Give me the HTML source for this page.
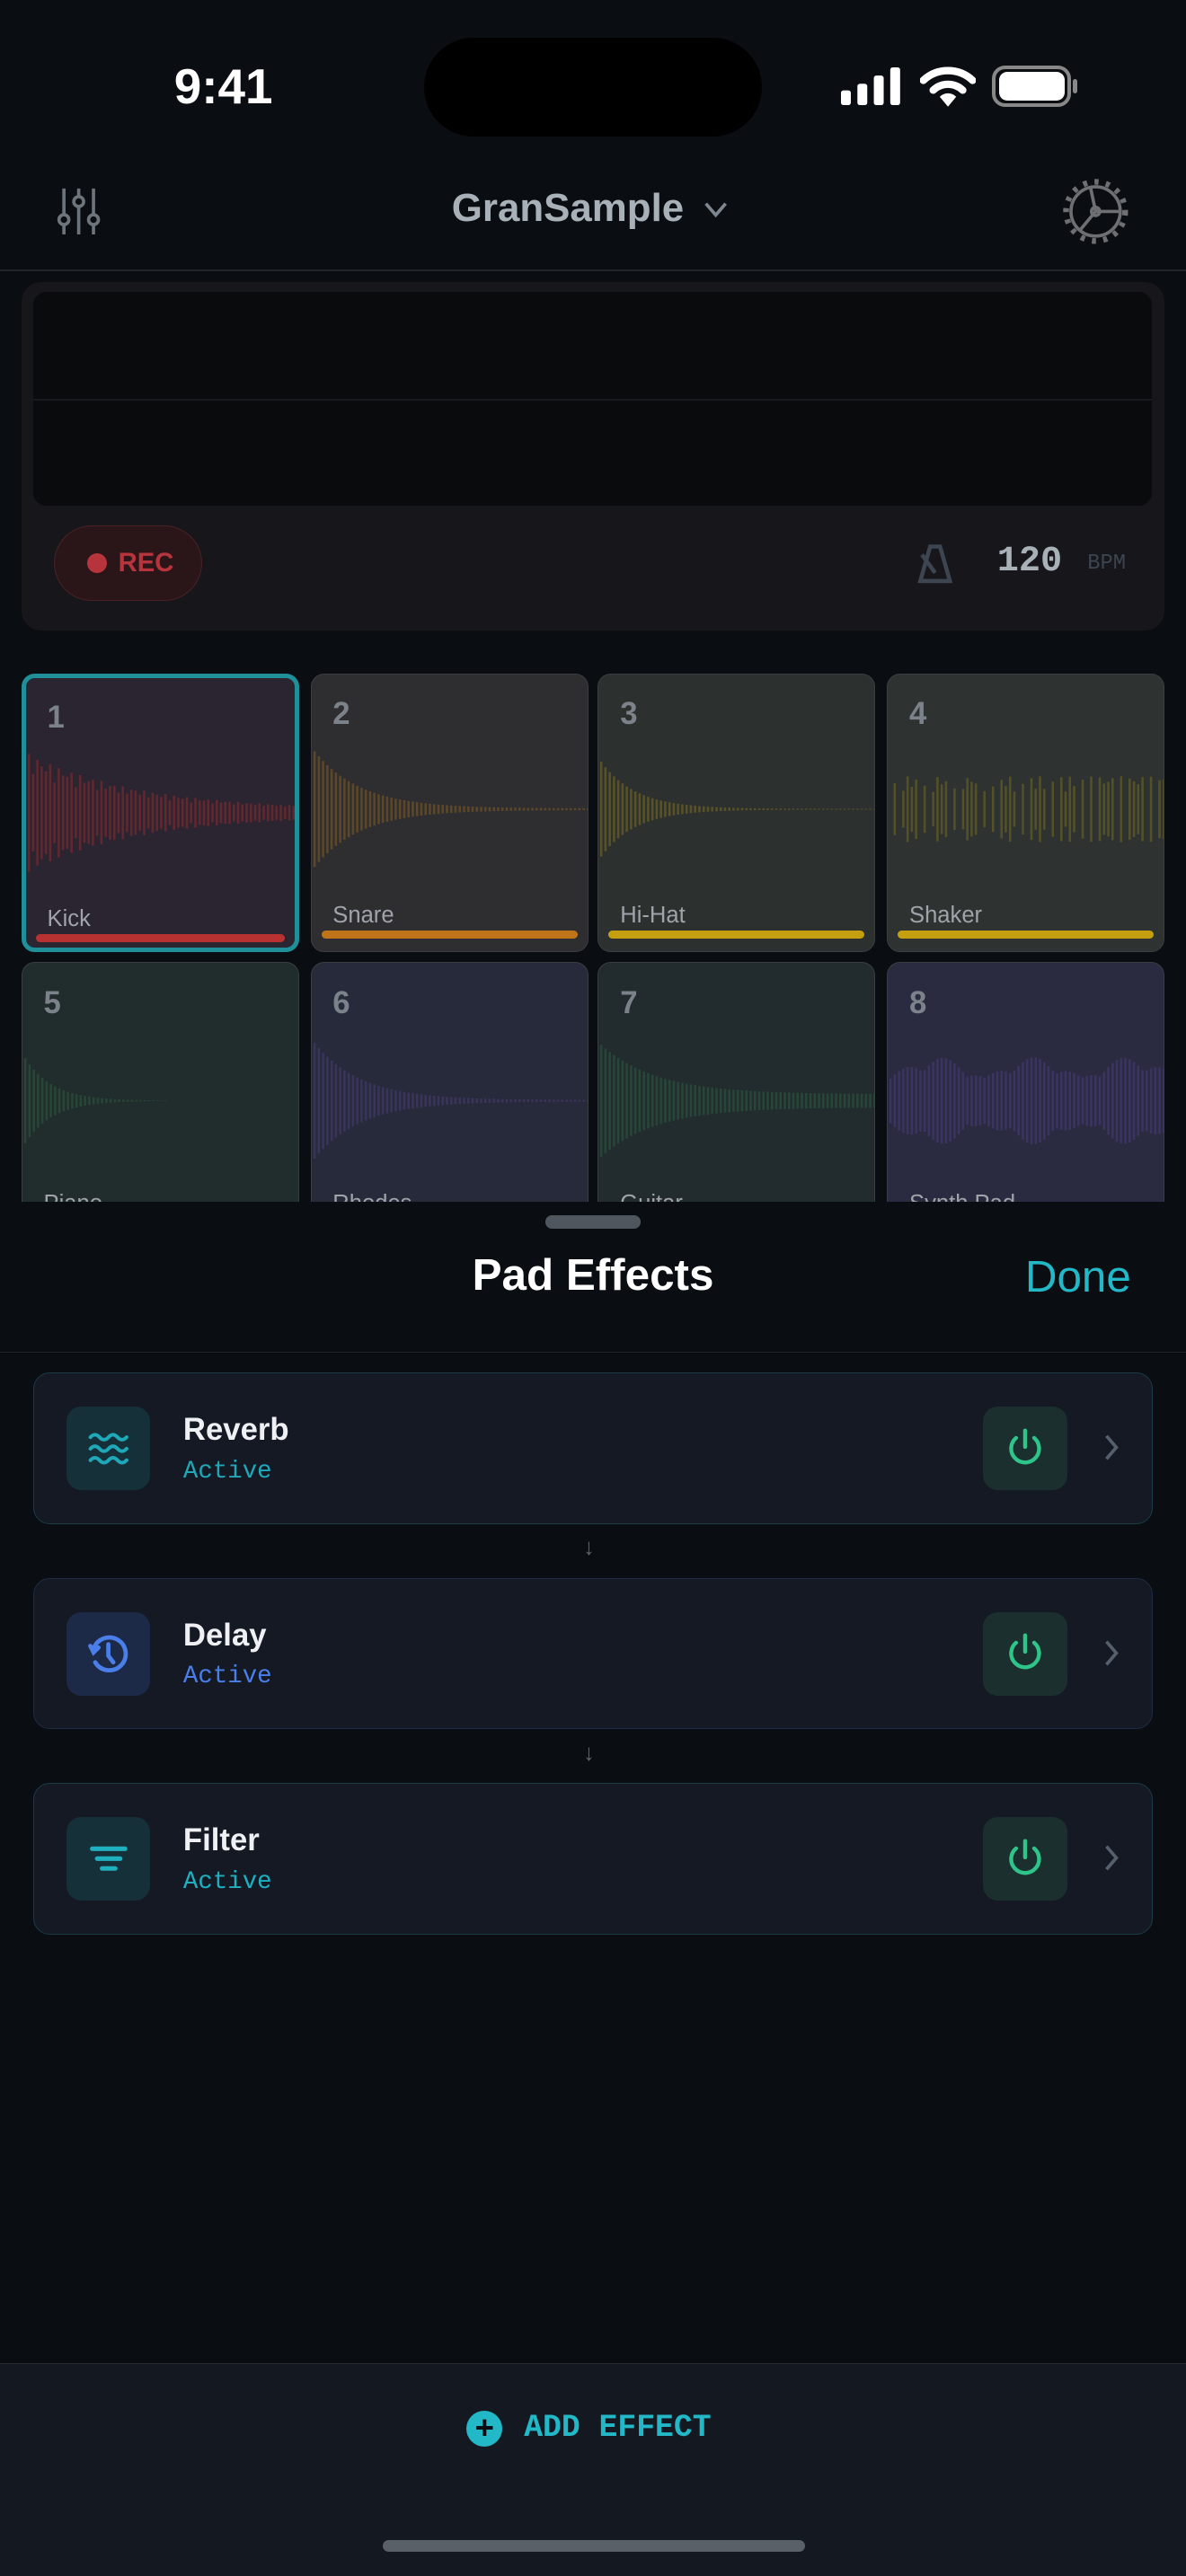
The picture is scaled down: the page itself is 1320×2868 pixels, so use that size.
<!DOCTYPE html>
<html><head><meta charset="utf-8">
<style>
*{box-sizing:border-box;margin:0;padding:0}
html,body{width:1320px;height:2868px;overflow:hidden;background:#0a0d11}
#r{zoom:1.82825;width:722px;height:1569px;position:relative;background:#0a0d11;font-family:"Liberation Sans",sans-serif;overflow:hidden}
.a{position:absolute}
.mono{font-family:"Liberation Mono",monospace}
.pad{position:absolute;width:169px;height:170px;border-radius:8px;border:1px solid #3a3d42;overflow:hidden}
.pad .n{position:absolute;left:13px;top:14px;font-size:19px;font-weight:bold;color:#7c828a}
.pad .l{position:absolute;left:13px;top:139px;font-size:14px;color:#a0a4aa}
.pad .b{position:absolute;left:6px;right:6px;top:156px;height:5px;border-radius:3px}
.pad svg{position:absolute;left:0;top:0}
.card{position:absolute;left:20px;width:682px;height:92px;border-radius:10px;background:#141924;border:1px solid #1c3a44}
.ib{position:absolute;left:20px;top:20px;width:51px;height:51px;border-radius:9px;display:flex;align-items:center;justify-content:center}
.ct{position:absolute;left:91px;top:24px;font-size:19px;color:#eef0f3;font-weight:bold}
.cs{position:absolute;left:91px;top:51px;font-size:15px}
.pw{position:absolute;left:578px;top:20px;width:51px;height:51px;border-radius:9px;background:#1a2f2e;display:flex;align-items:center;justify-content:center}
.ch{position:absolute;left:650px;top:36px}
.arr{position:absolute;left:355px;font-size:14px;color:#5a6470}
</style></head><body><div id="r">
<div class="a" style="left:106px;top:35px;font-size:30px;font-weight:bold;color:#fff">9:41</div>
<div class="a" style="left:258px;top:23px;width:206px;height:60px;border-radius:30px;background:#000"></div>
<svg class="a" style="left:512px;top:41px" width="38" height="24"><rect x="0" y="14" width="6" height="9" rx="1.5" fill="#fff"/><rect x="10" y="10" width="6" height="13" rx="1.5" fill="#fff"/><rect x="20" y="5" width="6" height="18" rx="1.5" fill="#fff"/><rect x="30" y="0" width="6" height="23" rx="1.5" fill="#fff"/></svg>
<svg class="a" style="left:560px;top:40px" width="34" height="26" viewBox="0 0 34 26"><path d="M2 9 A22 22 0 0 1 32 9" stroke="#fff" stroke-width="4.5" fill="none" stroke-linecap="round"/><path d="M8 15 A13 13 0 0 1 26 15" stroke="#fff" stroke-width="4.5" fill="none" stroke-linecap="round"/><path d="M12 19 L17 25 L22 19 A7 7 0 0 0 12 19Z" fill="#fff"/></svg>
<div class="a" style="left:604px;top:40px;width:48px;height:25px;border-radius:8px;border:2.5px solid #888"></div>
<div class="a" style="left:608px;top:44px;width:40px;height:17px;border-radius:5px;background:#fff"></div>
<div class="a" style="left:653px;top:48px;width:3px;height:9px;border-radius:2px;background:#888"></div>
<svg class="a" style="left:34px;top:114px" width="32" height="30" viewBox="0 0 32 30" stroke="#6e747c" stroke-width="2" fill="none"><path d="M5 1v28M14 1v28M23 1v28"/><circle cx="5" cy="20" r="3" fill="#0a0d11"/><circle cx="14" cy="9" r="3" fill="#0a0d11"/><circle cx="23" cy="20" r="3" fill="#0a0d11"/></svg>
<div class="a" style="left:275px;top:113px;font-size:24px;color:#a9b1b8;font-weight:bold">GranSample</div>
<svg class="a" style="left:428px;top:122px" width="16" height="12"><path d="M2 2l6 7 6-7" stroke="#7e8790" stroke-width="2" fill="none"/></svg>
<svg class="a" style="left:646px;top:108px" width="42" height="42" viewBox="0 0 42 42" fill="none" stroke="#6d6f72" stroke-width="2"><circle cx="21" cy="21" r="15"/><circle cx="21" cy="21" r="18" stroke-dasharray="2.5 4.5" stroke-width="3.5"/><circle cx="21" cy="21" r="2.5"/><path d="M21 21L18 7M21 21h14M21 21l-10 12"/></svg>
<div class="a" style="left:0;top:164px;width:722px;height:1px;background:#1e252b"></div>
<div class="a" style="left:13px;top:172px;width:696px;height:212px;border-radius:12px;background:#16161b"></div>
<div class="a" style="left:20px;top:178px;width:681px;height:130px;border-radius:8px;background:#0a0b0d"></div>
<div class="a" style="left:20px;top:243px;width:681px;height:1px;background:#18191c"></div>
<div class="a" style="left:33px;top:320px;width:90px;height:46px;border-radius:23px;background:#2a1619;border:1px solid #4a2226"></div>
<div class="a" style="left:53px;top:337px;width:12px;height:12px;border-radius:6px;background:#b8343c"></div>
<div class="a" style="left:72px;top:334px;font-size:16px;font-weight:bold;color:#b8343c">REC</div>
<svg class="a" style="left:556px;top:330px" width="28" height="28" viewBox="0 0 28 28" fill="none" stroke="#3c4550" stroke-width="2.5"><path d="M10 3h6l6 21H4z"/><path d="M13 19L5 8"/><path d="M4 24h18"/></svg>
<div class="a mono" style="left:607px;top:330px;font-size:22px;font-weight:bold;color:#a9b1b8">120</div>
<div class="a mono" style="left:662px;top:336px;font-size:13px;color:#3c4550">BPM</div>
<div id="pads"></div>
<div class="a" style="left:0;top:732px;width:722px;height:840px;background:#0a0e12;border-radius:12px 12px 0 0"></div>
<div class="a" style="left:332px;top:740px;width:58px;height:8px;border-radius:4px;background:#4f565e"></div>
<div class="a" style="left:0;top:761px;width:722px;text-align:center;font-size:27px;font-weight:bold;color:#fff">Pad Effects</div>
<div class="a" style="left:624px;top:762px;font-size:27px;color:#22b8c8">Done</div>
<div class="a" style="left:0;top:823px;width:722px;height:1px;background:#1e252b"></div>

<div class="card" style="top:836px;border-color:#1b3b45">
 <div class="ib" style="background:#16303a"><svg width="26" height="24" viewBox="0 0 26 24" fill="none" stroke="#1fa8b8" stroke-width="2.2" stroke-linecap="round"><path d="M2 5q2.75-3 5.5 0t5.5 0 5.5 0 5.5 0M2 12q2.75-3 5.5 0t5.5 0 5.5 0 5.5 0M2 19q2.75-3 5.5 0t5.5 0 5.5 0 5.5 0"/></svg></div>
 <div class="ct">Reverb</div><div class="cs mono" style="color:#1fa8b8">Active</div>
 <div class="pw"><svg width="24" height="26" viewBox="0 0 24 26" fill="none" stroke="#2ec48a" stroke-width="2.4" stroke-linecap="round"><path d="M12 2v10"/><path d="M6.5 6.5a8.5 8.5 0 1 0 11 0"/></svg></div>
 <svg class="ch" width="12" height="18"><path d="M3 2l6 7-6 7" stroke="#56606c" stroke-width="2" fill="none"/></svg>
</div>
<div class="arr" style="top:935px">↓</div>
<div class="card" style="top:961px;border-color:#1e2c44">
 <div class="ib" style="background:#1c2a48"><svg width="28" height="28" viewBox="0 0 28 28" fill="none" stroke="#4a7ee8" stroke-width="2.6" stroke-linecap="round"><path d="M5 11a10 10 0 1 1 1 8"/><path d="M3 9l2 4 3-3" fill="#4a7ee8"/><path d="M14 8v7l3 4"/></svg></div>
 <div class="ct">Delay</div><div class="cs mono" style="color:#4a7ee8">Active</div>
 <div class="pw"><svg width="24" height="26" viewBox="0 0 24 26" fill="none" stroke="#2ec48a" stroke-width="2.4" stroke-linecap="round"><path d="M12 2v10"/><path d="M6.5 6.5a8.5 8.5 0 1 0 11 0"/></svg></div>
 <svg class="ch" width="12" height="18"><path d="M3 2l6 7-6 7" stroke="#56606c" stroke-width="2" fill="none"/></svg>
</div>
<div class="arr" style="top:1060px">↓</div>
<div class="card" style="top:1086px;border-color:#1b3b45">
 <div class="ib" style="background:#16303a"><svg width="24" height="20" viewBox="0 0 24 20" stroke="#1fb0c0" stroke-width="2.8" stroke-linecap="round"><path d="M2 4h20M5 10h14M8 16h8"/></svg></div>
 <div class="ct">Filter</div><div class="cs mono" style="color:#1fb0c0">Active</div>
 <div class="pw"><svg width="24" height="26" viewBox="0 0 24 26" fill="none" stroke="#2ec48a" stroke-width="2.4" stroke-linecap="round"><path d="M12 2v10"/><path d="M6.5 6.5a8.5 8.5 0 1 0 11 0"/></svg></div>
 <svg class="ch" width="12" height="18"><path d="M3 2l6 7-6 7" stroke="#56606c" stroke-width="2" fill="none"/></svg>
</div>
<div class="a" style="left:0;top:1439px;width:722px;height:130px;background:#141820;border-top:1px solid #252b33"></div>
<div class="a" style="left:284px;top:1468px;width:22px;height:22px;border-radius:11px;background:#22b8c8;color:#0a0e12;font-size:20px;line-height:21px;text-align:center;font-weight:bold">+</div>
<div class="a mono" style="left:319px;top:1468px;font-size:19px;font-weight:bold;color:#22b8c8">ADD EFFECT</div>
<div class="a" style="left:233px;top:1547px;width:257px;height:7px;border-radius:4px;background:#5a6068"></div>
</div>
<script>
var pads=[
[13,410,"1","Kick","#2a2530","#9a2a2e","#b83232","kick"],
[189,410,"2","Snare","#2e2e31","#8a6020","#c0741a","dec"],
[364,410,"3","Hi-Hat","#2c302f","#857420","#c4a010","fast"],
[540,410,"4","Shaker","#2e3230","#7a7020","#c4a010","shake"],
[13,586,"5","Piano","#212c2d","#2e6040","","fast2"],
[189,586,"6","Rhodes","#272a3a","#4c3e7a","","dec"],
[364,586,"7","Guitar","#222c2e","#2e6040","","gtr"],
[540,586,"8","Synth Pad","#2a2b40","#4a3e80","","pad"]];
var h="";
pads.forEach(function(p,i){
 var s='<svg width="169" height="170">';
 var mid=i<4?82:84;
 for(var x=1;x<168;x+=2.6){
  var t=x/168,a;
  if(p[7]=="kick")a=70*Math.exp(-t*2.5)*(0.6+0.4*Math.abs(Math.sin(x*1.7)))+3;
  else if(p[7]=="dec")a=72*Math.exp(-t*6)+1;
  else if(p[7]=="fast")a=60*Math.exp(-t*8)+0.5;
  else if(p[7]=="fast2")a=55*Math.exp(-t*10);
  else if(p[7]=="gtr")a=62*Math.exp(-t*5)+8;
  else if(p[7]=="shake")a=(Math.abs(Math.sin(x*3.1))>0.5?20+20*Math.abs(Math.sin(x*0.7)):0);
  else a=(28+25*Math.abs(Math.sin(t*9)))*(0.7+0.3*Math.abs(Math.sin(x*2.3)));
  if(a>0.3)s+='<rect x="'+x+'" y="'+(mid-a/2)+'" width="1.4" height="'+a+'" fill="'+p[5]+'" opacity="0.5"/>';
 }
 s+='</svg>';
 var bd=i==0?'border:3px solid #1f8f99;':'';
 h+='<div class="pad" style="left:'+p[0]+'px;top:'+p[1]+'px;background:'+p[4]+';'+bd+'">'+s+'<div class="n">'+p[2]+'</div><div class="l">'+p[3]+'</div>'+(p[6]?'<div class="b" style="background:'+p[6]+'"></div>':'')+'</div>';
});
document.getElementById("pads").innerHTML=h;
</script>
</body></html>
